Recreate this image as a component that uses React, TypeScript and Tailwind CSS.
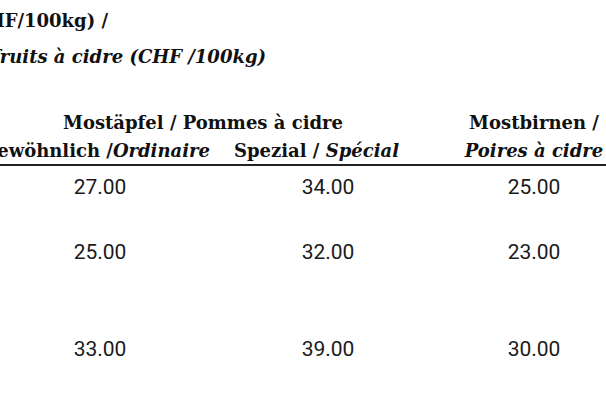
const serif = "font-['DejaVu_Serif',serif]";
const nums = "font-['Roboto','Liberation_Sans',sans-serif]";

const rows = [
  ["27.00", "34.00", "25.00"],
  ["25.00", "32.00", "23.00"],
  ["33.00", "39.00", "30.00"],
];

export default function App() {
  return (
    <div className="w-[606px] h-[402px] overflow-hidden bg-white text-[#111]">
      {/* Title, cut off on the left */}
      <div className={`${serif} mt-[3px] text-[18px] font-bold leading-[36px] whitespace-nowrap`}>
        <div className="w-[108px] flex justify-end">
          <span>Richtpreise Mostobst (CHF/100kg) /</span>
        </div>
        <div className="w-[266px] flex justify-end italic">
          <span>Prix indicatifs des fruits à cidre (CHF /100kg)</span>
        </div>
      </div>

      {/* Table */}
      <div className="-ml-[40px] w-[692px] mt-[32px]">
        <div className={`${serif} font-bold text-[18px] whitespace-nowrap`}>
          <div className="grid grid-cols-[280px_176px_236px] h-[30px] items-center">
            <div className="col-span-2 flex justify-center pl-[30px]">
              Mostäpfel / Pommes à cidre
            </div>
            <div className="flex justify-center">Mostbirnen /</div>
          </div>
          <div className="grid grid-cols-[280px_176px_236px] h-[29px] items-center border-b-2 border-[#222]">
            <div className="flex justify-end pr-[30px]">
              <span>
                Gewöhnlich /<span className="italic">Ordinaire</span>
              </span>
            </div>
            <div className="flex justify-end pr-[17px]">
              <span>
                Spezial / <span className="italic">Spécial</span>
              </span>
            </div>
            <div className="flex justify-center italic">Poires à cidre</div>
          </div>
        </div>

        <div className={`${nums} text-[21px] leading-[24px] text-[#1a1a1a]`}>
          {rows.map((r, i) => (
            <div
              key={i}
              className={`grid grid-cols-[280px_176px_236px] ${
                i === 0 ? "mt-[9px]" : i === 1 ? "mt-[41px]" : "mt-[73px]"
              }`}
            >
              <div className="text-center">{r[0]}</div>
              <div className="text-center">{r[1]}</div>
              <div className="text-center">{r[2]}</div>
            </div>
          ))}
        </div>
      </div>
    </div>
  );
}
